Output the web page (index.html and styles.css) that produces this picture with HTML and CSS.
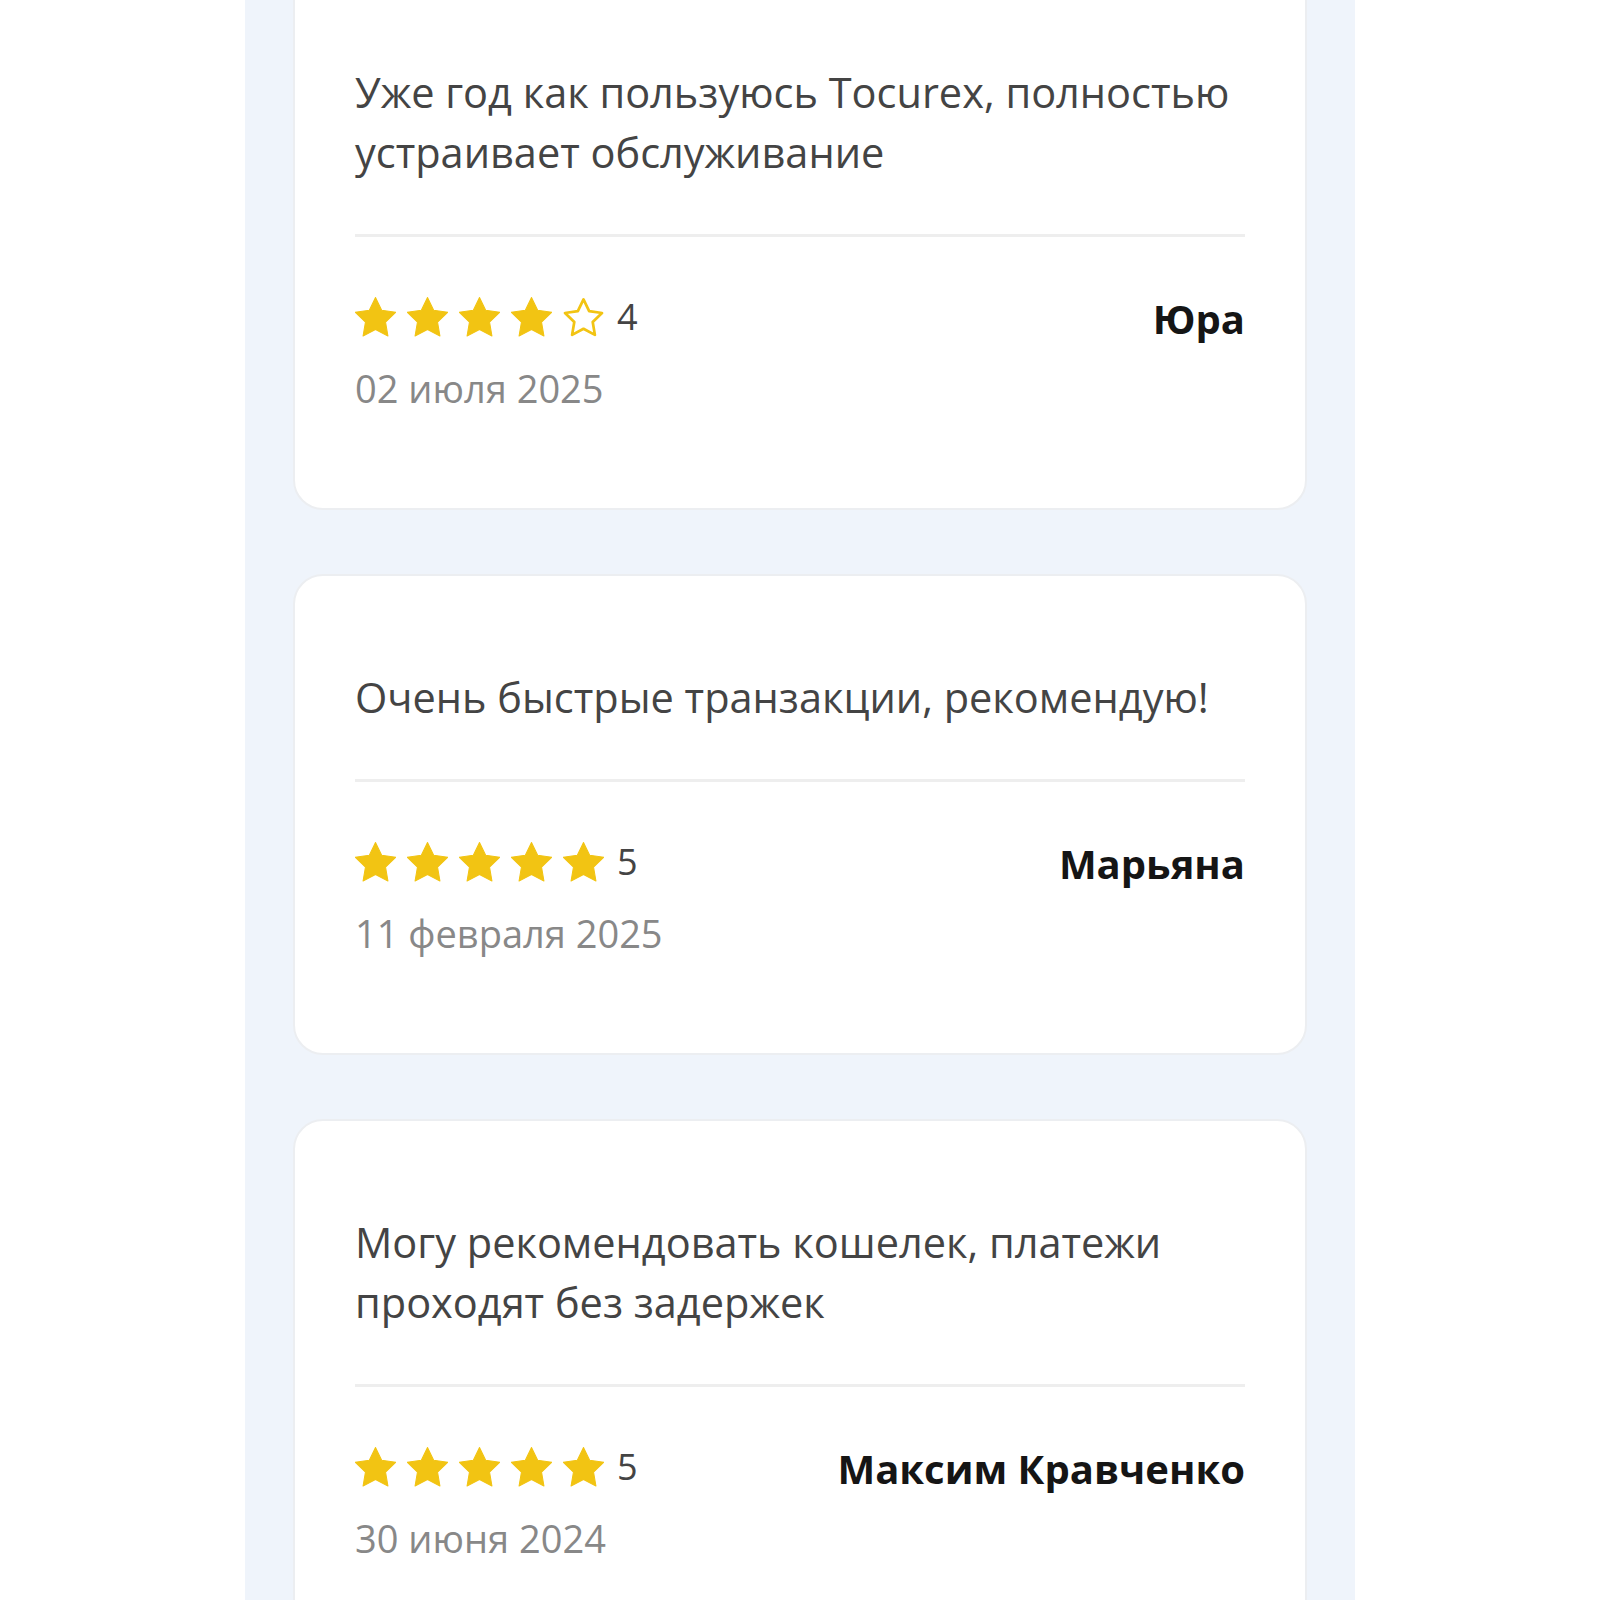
FILE: index.html
```html
<!DOCTYPE html>
<html lang="ru">
<head>
<meta charset="utf-8">
<title>Отзывы</title>
<link rel="stylesheet" href="styles.css">
</head>
<body>
<div class="page">
  <section class="reviews">
    <article class="card">
      <p class="text">Уже год как пользуюсь Tocurex, полностью устраивает обслуживание</p>
      <hr class="divider">
      <div class="footer">
        <div class="meta">
          <div class="rating">
            <svg class="star" viewBox="2.2 2 19.6 19"><path class="fill" d="M12 2.2l2.95 6.1 6.7.95-4.85 4.7 1.15 6.65L12 17.45 6.05 20.6l1.15-6.65-4.85-4.7 6.7-.95z"/></svg>
            <svg class="star" viewBox="2.2 2 19.6 19"><path class="fill" d="M12 2.2l2.95 6.1 6.7.95-4.85 4.7 1.15 6.65L12 17.45 6.05 20.6l1.15-6.65-4.85-4.7 6.7-.95z"/></svg>
            <svg class="star" viewBox="2.2 2 19.6 19"><path class="fill" d="M12 2.2l2.95 6.1 6.7.95-4.85 4.7 1.15 6.65L12 17.45 6.05 20.6l1.15-6.65-4.85-4.7 6.7-.95z"/></svg>
            <svg class="star" viewBox="2.2 2 19.6 19"><path class="fill" d="M12 2.2l2.95 6.1 6.7.95-4.85 4.7 1.15 6.65L12 17.45 6.05 20.6l1.15-6.65-4.85-4.7 6.7-.95z"/></svg>
            <svg class="star" viewBox="2.2 2 19.6 19"><path class="empty" d="M12 3.1l2.7 5.6 6.15.9-4.45 4.33 1.05 6.12L12 17.15 6.55 20.05l1.05-6.12L3.150 9.6l6.15-.9z"/></svg>
            <span class="score">4</span>
          </div>
          <div class="date">02 июля 2025</div>
        </div>
        <div class="name">Юра</div>
      </div>
    </article>

    <article class="card">
      <p class="text">Очень быстрые транзакции, рекомендую!</p>
      <hr class="divider">
      <div class="footer">
        <div class="meta">
          <div class="rating">
            <svg class="star" viewBox="2.2 2 19.6 19"><path class="fill" d="M12 2.2l2.95 6.1 6.7.95-4.85 4.7 1.15 6.65L12 17.45 6.05 20.6l1.15-6.65-4.85-4.7 6.7-.95z"/></svg>
            <svg class="star" viewBox="2.2 2 19.6 19"><path class="fill" d="M12 2.2l2.95 6.1 6.7.95-4.85 4.7 1.15 6.65L12 17.45 6.05 20.6l1.15-6.65-4.85-4.7 6.7-.95z"/></svg>
            <svg class="star" viewBox="2.2 2 19.6 19"><path class="fill" d="M12 2.2l2.95 6.1 6.7.95-4.85 4.7 1.15 6.65L12 17.45 6.05 20.6l1.15-6.65-4.85-4.7 6.7-.95z"/></svg>
            <svg class="star" viewBox="2.2 2 19.6 19"><path class="fill" d="M12 2.2l2.95 6.1 6.7.95-4.85 4.7 1.15 6.65L12 17.45 6.05 20.6l1.15-6.65-4.85-4.7 6.7-.95z"/></svg>
            <svg class="star" viewBox="2.2 2 19.6 19"><path class="fill" d="M12 2.2l2.95 6.1 6.7.95-4.85 4.7 1.15 6.65L12 17.45 6.05 20.6l1.15-6.65-4.85-4.7 6.7-.95z"/></svg>
            <span class="score">5</span>
          </div>
          <div class="date">11 февраля 2025</div>
        </div>
        <div class="name">Марьяна</div>
      </div>
    </article>

    <article class="card">
      <p class="text">Могу рекомендовать кошелек, платежи проходят без задержек</p>
      <hr class="divider">
      <div class="footer">
        <div class="meta">
          <div class="rating">
            <svg class="star" viewBox="2.2 2 19.6 19"><path class="fill" d="M12 2.2l2.95 6.1 6.7.95-4.85 4.7 1.15 6.65L12 17.45 6.05 20.6l1.15-6.65-4.85-4.7 6.7-.95z"/></svg>
            <svg class="star" viewBox="2.2 2 19.6 19"><path class="fill" d="M12 2.2l2.95 6.1 6.7.95-4.85 4.7 1.15 6.65L12 17.45 6.05 20.6l1.15-6.65-4.85-4.7 6.7-.95z"/></svg>
            <svg class="star" viewBox="2.2 2 19.6 19"><path class="fill" d="M12 2.2l2.95 6.1 6.7.95-4.85 4.7 1.15 6.65L12 17.45 6.05 20.6l1.15-6.65-4.85-4.7 6.7-.95z"/></svg>
            <svg class="star" viewBox="2.2 2 19.6 19"><path class="fill" d="M12 2.2l2.95 6.1 6.7.95-4.85 4.7 1.15 6.65L12 17.45 6.05 20.6l1.15-6.65-4.85-4.7 6.7-.95z"/></svg>
            <svg class="star" viewBox="2.2 2 19.6 19"><path class="fill" d="M12 2.2l2.95 6.1 6.7.95-4.85 4.7 1.15 6.65L12 17.45 6.05 20.6l1.15-6.65-4.85-4.7 6.7-.95z"/></svg>
            <span class="score">5</span>
          </div>
          <div class="date">30 июня 2024</div>
        </div>
        <div class="name">Максим Кравченко</div>
      </div>
    </article>
  </section>
</div>
</body>
</html>
```

FILE: styles.css
```css
html, body {
  margin: 0;
  padding: 0;
  background: #ffffff;
  height: 1600px;
  overflow: hidden;
}

body {
  font-family: "Open Sans", "Noto Sans", sans-serif;
}

.page {
  width: 1110px;
  margin: 0 auto;
  padding: 0 48px;
  box-sizing: border-box;
  background: #eff4fb;
  min-height: 1600px;
}

.reviews {
  display: flex;
  flex-direction: column;
  gap: 64px;
  margin-top: -31px;
}

.card {
  background: #ffffff;
  border: 2px solid #eceef1;
  border-radius: 30px;
  padding: 91px 60px 96px;
}

.text {
  margin: 0;
  font-size: 41.5px;
  line-height: 60px;
  color: #444444;
}

.divider {
  margin: 52px 0 0;
  border: 0;
  height: 3px;
  background: #eeeeee;
}

.footer {
  display: flex;
  justify-content: space-between;
  align-items: flex-start;
  margin-top: 56px;
}

.meta {
  display: flex;
  flex-direction: column;
  gap: 23px;
}

.rating {
  display: flex;
  align-items: center;
  gap: 11px;
  height: 48px;
}

.star {
  width: 41px;
  height: 40px;
  display: block;
}

.star .fill {
  fill: #f2c413;
  stroke: #f2c413;
  stroke-width: 0.5;
  stroke-linejoin: round;
}

.star .empty {
  fill: none;
  stroke: #f2c413;
  stroke-width: 1.3;
  stroke-linejoin: round;
}

.score {
  font-size: 36px;
  line-height: 48px;
  color: #444444;
  margin-left: 2px;
}

.date {
  font-size: 38px;
  line-height: 48px;
  color: #888888;
}

.name {
  font-size: 40px;
  line-height: 48px;
  font-weight: 700;
  color: #151515;
  margin-top: 2px;
}
```
